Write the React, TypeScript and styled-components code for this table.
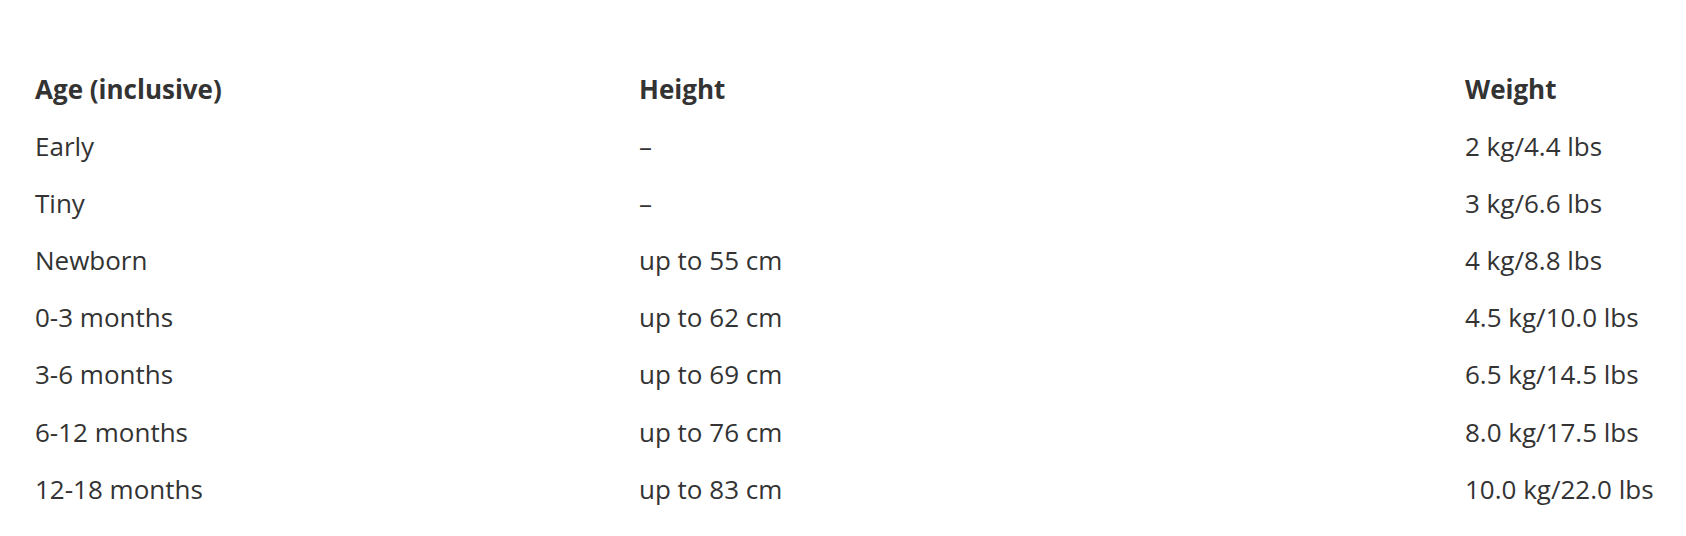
import React from "react";
import styled, { createGlobalStyle } from "styled-components";

const Global = createGlobalStyle`
  html, body { margin: 0; padding: 0; background: #fff; }
  body { font-family: "Open Sans", "Liberation Sans", sans-serif; color: #333; }
`;

const Table = styled.div`
  display: grid;
  grid-template-columns: 604px 826px 1fr;
  padding: 61px 0 0 35px;
  font-size: 26px;
  line-height: 57.1px;
`;

const Cell = styled.div<{ $head?: boolean }>`
  font-weight: ${(p) => (p.$head ? 700 : 400)};
  color: #333;
  white-space: nowrap;
`;

const rows: [string, string, string][] = [
  ["Early", "–", "2 kg/4.4 lbs"],
  ["Tiny", "–", "3 kg/6.6 lbs"],
  ["Newborn", "up to 55 cm", "4 kg/8.8 lbs"],
  ["0-3 months", "up to 62 cm", "4.5 kg/10.0 lbs"],
  ["3-6 months", "up to 69 cm", "6.5 kg/14.5 lbs"],
  ["6-12 months", "up to 76 cm", "8.0 kg/17.5 lbs"],
  ["12-18 months", "up to 83 cm", "10.0 kg/22.0 lbs"],
];

export default function App() {
  return (
    <>
      <Global />
      <Table>
        <Cell $head>Age (inclusive)</Cell>
        <Cell $head>Height</Cell>
        <Cell $head>Weight</Cell>
        {rows.map((r) => (
          <React.Fragment key={r[0]}>
            <Cell>{r[0]}</Cell>
            <Cell>{r[1]}</Cell>
            <Cell>{r[2]}</Cell>
          </React.Fragment>
        ))}
      </Table>
    </>
  );
}
